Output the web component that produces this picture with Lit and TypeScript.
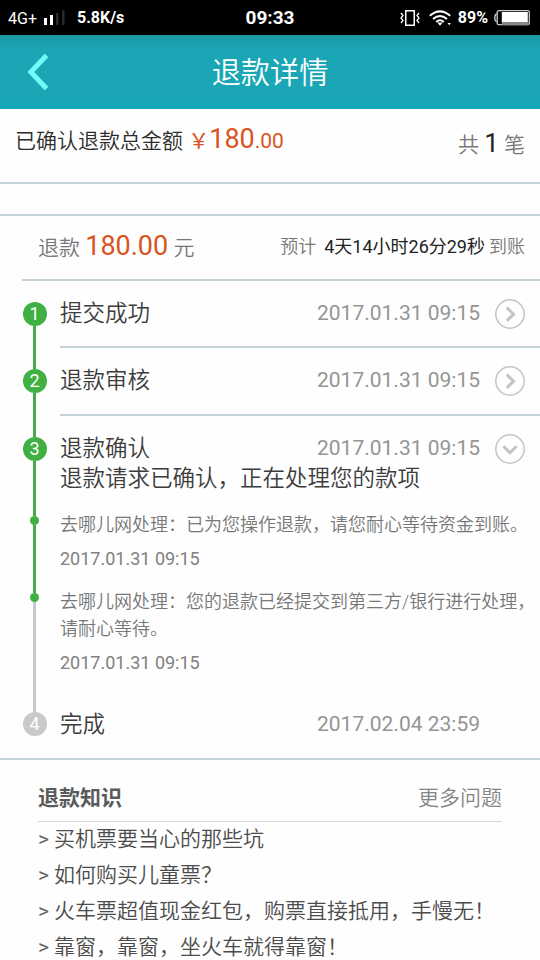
import { LitElement, html, css, svg, nothing } from "lit";
import { customElement, property } from "lit/decorators.js";
import { classMap } from "lit/directives/class-map.js";

interface Step {
  no: number;
  title: string;
  date: string;
  arrow?: "right" | "down";
  message?: string;
  done: boolean;
}

interface Detail {
  text: string;
  date: string;
  last: boolean;
}

@customElement("status-bar")
class StatusBar extends LitElement {
  static styles = css`
    :host {
      display: grid;
      grid-template-columns: 1fr auto 1fr;
      align-items: center;
      height: 35px;
      background: #000;
      color: #fff;
      font-weight: 700;
    }
    .left, .right { display: flex; align-items: center; height: 35px; }
    .left { padding-left: 8px; }
    .right { justify-content: flex-end; padding-right: 10px; }
    .net { font-size: 16px; font-weight: 400; line-height: 20px; padding-top: 3px; width: 30px; }
    .signal { margin-left: 5px; }
    .speed { font-size: 16px; margin-left: 12px; line-height: 20px; padding-top: 1px; }
    .time { font-size: 19px; line-height: 35px; }
    .wifi { margin-left: 9px; }
    .pct { font-size: 16px; margin: 0 6px 0 7px; line-height: 20px; }
    svg { display: block; }
  `;
  render() {
    return html`
      <div class="left">
        <span class="net">4G+</span>
        <svg class="signal" width="22" height="16" viewBox="0 0 22 16">
          <rect x="1" y="8" width="3" height="7" fill="#fff" />
          <rect x="7" y="5" width="3" height="10" fill="#fff" />
          <rect x="13" y="3" width="2.5" height="12" fill="#2a2a2a" />
          <rect x="19" y="0" width="2.5" height="15" fill="#2a2a2a" />
        </svg>
        <span class="speed">5.8K/s</span>
      </div>
      <span class="time">09:33</span>
      <div class="right">
        <svg width="20" height="16" viewBox="0 0 20 16" fill="none" stroke="#fff">
          <rect x="5.75" y="0.75" width="8.5" height="14.5" stroke-width="1.5" />
          <path d="M1 3l2 2.5-2 2.5 2 2.5-2 2.5M19 3l-2 2.5 2 2.5-2 2.5 2 2.5" stroke-width="1.3" />
        </svg>
        <svg class="wifi" width="22" height="16" viewBox="0 0 22 16" fill="none" stroke="#fff" stroke-width="2">
          <path d="M0.8 5.8Q11 -3 21.2 5.8M4 9Q11 3 18 9M7.2 12Q11 8.6 14.8 12" />
          <path d="M8.3 12.6h5.4L11 15.8z" fill="#fff" stroke="none" />
          <path d="M18.5 13h3.4L20.2 15.2z" fill="#fff" stroke="none" />
        </svg>
        <span class="pct">89%</span>
        <svg width="36" height="16" viewBox="0 0 36 16">
          <path d="M2.8 4.2Q0.8 4.2 0.8 7.8t2 3.6" fill="none" stroke="#ddd" stroke-width="1.3" />
          <rect x="3.2" y="0.7" width="32.1" height="14" rx="1.5" fill="#000" stroke="#ccc" stroke-width="1.3" />
          <rect x="7.8" y="2" width="26" height="10.5" fill="#fff" />
          <rect x="7.8" y="12.3" width="27.5" height="2.9" fill="#888" />
        </svg>
      </div>
    `;
  }
}

@customElement("refund-step")
class RefundStep extends LitElement {
  @property({ attribute: false }) step!: Step;
  static styles = css`
    :host { display: flex; padding-left: 22px; }
    .rail { width: 25px; flex: none; display: flex; flex-direction: column; align-items: center; }
    .line { width: 3px; background: #49a74c; }
    .line.grey { background: #c9c9c9; }
    .line.none { background: none; }
    .top { height: 21px; }
    .bottom { flex: 1; }
    .num {
      width: 24px; height: 24px; border-radius: 50%; background: #40b043; color: #fff;
      font-size: 18px; line-height: 24px; text-align: center;
    }
    .num.grey { background: #c9c9c9; }
    .body { flex: 1; margin-left: 13px; box-sizing: border-box; height: 67px; border-bottom: 2px solid #c6d2d9; }
    .body.tall { height: 68px; }
    .body.open { height: 81px; border-bottom: none; }
    .body.final { border-bottom: none; }
    .head { display: flex; align-items: center; height: 65px; }
    .title { flex: 1; font-size: 22.5px; line-height: 32px; color: #3c3c3c; font-weight: 350; padding-bottom: 2px; }
    .date { font-size: 21px; line-height: 32px; color: #959595; margin-right: 15px; padding-bottom: 2px; }
    .final .title, .final .date { padding-bottom: 0; }
    .arrow { width: 30px; height: 30px; margin-right: 15px; }
    .arrow svg { display: block; }
    .msg { font-size: 22.5px; line-height: 30px; color: #3c3c3c; font-weight: 350; margin-top: -18px; }
  `;
  render() {
    const s = this.step;
    const grey = !s.done;
    return html`
      <div class="rail">
        <div class=${classMap({ line: true, top: true, grey, none: s.no === 1 })}></div>
        <div class=${classMap({ num: true, grey })}>${s.no}</div>
        <div class=${classMap({ line: true, bottom: true, none: grey })}></div>
      </div>
      <div class=${classMap({ body: true, open: !!s.message, final: grey, tall: s.no === 2 })}>
        <div class="head">
          <span class="title">${s.title}</span>
          <span class="date">${s.date}</span>
          <span class="arrow">${s.arrow
            ? html`<svg width="30" height="30" viewBox="0 0 30 30" fill="none" stroke="#c4c4c4">
                <circle cx="15" cy="15" r="14.2" stroke-width="1.5" />
                ${s.arrow === "right"
                  ? svg`<path d="M11.8 8.6l6.8 6.6-6.8 6.6" stroke-width="3" />`
                  : svg`<path d="M8.4 12.2l6.6 6.6 6.6-6.6" stroke-width="3" />`}
              </svg>`
            : nothing}</span>
        </div>
        ${s.message ? html`<div class="msg">${s.message}</div>` : nothing}
      </div>
    `;
  }
}

@customElement("refund-detail")
class RefundDetail extends LitElement {
  @property({ attribute: false }) detail!: Detail;
  static styles = css`
    :host { display: flex; padding-left: 22px; }
    .rail { width: 25px; flex: none; display: flex; flex-direction: column; align-items: center; }
    .line { width: 3px; background: #49a74c; }
    .top { height: 19px; }
    .bottom { flex: 1; }
    .grey { background: #c9c9c9; }
    .dot { width: 9px; height: 9px; border-radius: 50%; background: #40b043; }
    .body { flex: 1; margin-left: 13px; padding: 14px 0 0; color: #777; font-size: 18px; }
    .text { line-height: 27px; font-weight: 350; }
    .date { line-height: 27px; margin-top: 7px; padding-bottom: 2px; color: #808080; }
    .body.last { padding-bottom: 13px; }
  `;
  render() {
    const d = this.detail;
    return html`
      <div class="rail">
        <div class="line top"></div>
        <div class="dot"></div>
        <div class=${classMap({ line: true, bottom: true, grey: d.last })}></div>
      </div>
      <div class=${classMap({ body: true, last: d.last })}>
        <div class="text">${d.text}</div>
        <div class="date">${d.date}</div>
      </div>
    `;
  }
}

const STEPS: Step[] = [
  { no: 1, title: "提交成功", date: "2017.01.31 09:15", arrow: "right", done: true },
  { no: 2, title: "退款审核", date: "2017.01.31 09:15", arrow: "right", done: true },
  { no: 3, title: "退款确认", date: "2017.01.31 09:15", arrow: "down", done: true, message: "退款请求已确认，正在处理您的款项" },
];
const DETAILS: Detail[] = [
  { text: "去哪儿网处理：已为您操作退款，请您耐心等待资金到账。", date: "2017.01.31 09:15", last: false },
  { text: "去哪儿网处理：您的退款已经提交到第三方/银行进行处理，请耐心等待。", date: "2017.01.31 09:15", last: true },
];
const FINAL: Step = { no: 4, title: "完成", date: "2017.02.04 23:59", done: false };
const TOPICS = [
  "买机票要当心的那些坑",
  "如何购买儿童票？",
  "火车票超值现金红包，购票直接抵用，手慢无！",
  "靠窗，靠窗，坐火车就得靠窗！",
];

@customElement("app-root")
class AppRoot extends LitElement {
  static styles = css`
    :host {
      display: block; width: 540px; height: 960px; overflow: hidden; background: #fefefe;
      font-family: Roboto, "Noto Sans CJK SC", sans-serif; white-space: normal;
    }
    .nav {
      display: grid; grid-template-columns: 60px 1fr 60px; align-items: center; height: 74px;
      background: linear-gradient(#1b98a4, #1ba6b6 16px, #1ba6b6 66px, #10a9bb);
      color: #fff;
    }
    .nav svg { display: block; margin-left: 27px; }
    .nav h1 { margin: 0; font-size: 29.2px; line-height: 71px; padding-top: 3px; font-weight: 350; text-align: center; }
    .total {
      display: flex; justify-content: space-between; box-sizing: border-box; height: 75px;
      padding: 0 15px 0 15px; border-bottom: 2px solid #c6d2d9; font-size: 21px; color: #2c2c2c;
    }
    .sum { line-height: 61px; white-space: pre; }
    .label { font-weight: 350; }
    .count { line-height: 69px; color: #777; white-space: pre; }
    .orange { color: #d9541e; }
    .big { font-size: 27px; }
    .count .big { font-size: 26px; }
    .dark { color: #222; }
    .gap { height: 30px; border-bottom: 2px solid #c6d2d9; }
    .sub {
      display: flex; justify-content: space-between; align-items: center; box-sizing: border-box; height: 65px;
      margin-left: 22px; padding: 0 15px 0 16px; border-bottom: 2px solid #c6d2d9; color: #777;
      white-space: pre;
    }
    .amount { font-size: 21px; line-height: 60px; padding-bottom: 1px; }
    .eta { font-size: 18px; line-height: 60px; padding-bottom: 1px; }
    .eta .dark { margin: 0 4px 0 8px; }
    .know { border-top: 2px solid #c6d2d9; padding: 0 38px; }
    .khead {
      display: flex; justify-content: space-between; align-items: center; height: 62px; box-sizing: border-box;
      padding-top: 11px; border-bottom: 1px solid #d5d9d9; font-size: 21px; color: #858585; font-weight: 350;
    }
    .khead b { font-weight: 700; color: #5a5a5a; }
    ul { list-style: none; margin: 0; padding: 0; }
    li { font-size: 21px; line-height: 36px; color: #4c4c4c; white-space: pre; font-weight: 350; }
    li:first-child { line-height: 35px; }
    .gt { font-weight: 400; color: #666; }
  `;
  render() {
    return html`
      <status-bar></status-bar>
      <div class="nav">
        <svg width="23" height="38" viewBox="0 0 23 38" fill="none" stroke="#6ffcfa" stroke-width="5">
          <path d="M19.5 2.5L3.8 19l15.7 16.5" />
        </svg>
        <h1>退款详情</h1>
      </div>
      <div class="total">
        <div class="sum"><span class="label">已确认退款总金额</span> <span class="orange">￥<span class="big">180</span>.00</span></div>
        <div class="count"><span class="label">共</span> <span class="dark big">1</span> <span class="label">笔</span></div>
      </div>
      <div class="gap"></div>
      <div class="sub">
        <div class="amount"><span class="label">退款</span> <span class="orange big">180.00</span> <span class="label">元</span></div>
        <div class="eta"><span class="label">预计</span><span class="dark">4天14小时26分29秒</span><span class="label">到账</span></div>
      </div>
      ${STEPS.map((s) => html`<refund-step .step=${s}></refund-step>`)}
      ${DETAILS.map((d) => html`<refund-detail .detail=${d}></refund-detail>`)}
      <refund-step .step=${FINAL}></refund-step>
      <div class="know">
        <div class="khead"><b>退款知识</b><span>更多问题</span></div>
        <ul>${TOPICS.map((t) => html`<li><span class="gt">&gt;</span> ${t}</li>`)}</ul>
      </div>
    `;
  }
}
